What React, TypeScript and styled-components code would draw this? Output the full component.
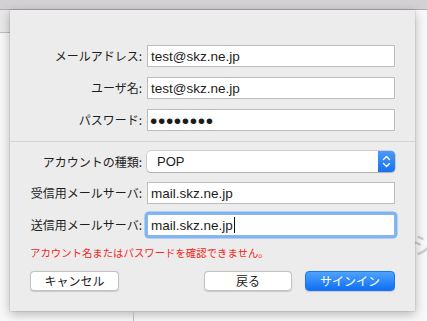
import React from 'react';
import styled, { createGlobalStyle } from 'styled-components';

const GlobalStyle = createGlobalStyle`
  html, body {
    margin: 0;
    padding: 0;
    background: #f7f7f7;
  }
  body {
    font-family: "Noto Sans CJK JP", "Liberation Sans", sans-serif;
    -webkit-font-smoothing: antialiased;
  }
`;

const Page = styled.div`
  width: 427px;
  height: 321px;
  display: flex;
  flex-direction: column;
  overflow: hidden;
  background: #f8f8f8;
`;

const TitleStrip = styled.div`
  height: 9px;
  flex: none;
  background: #d3d1d3;
  border-bottom: 1px solid #aeadae;
`;

const Body = styled.div`
  flex: 1;
  display: flex;
`;

const LeftGutter = styled.div`
  width: 10px;
  flex: none;
  display: flex;
  flex-direction: column;
`;

const GutterBlock = styled.div`
  height: 22px;
  background: #e9e8e9;
  border-bottom: 1px solid #bdbdbd;
`;

const SheetColumn = styled.div`
  width: 405px;
  flex: none;
  display: flex;
  flex-direction: column;
  position: relative;
  z-index: 1;
`;

const Sheet = styled.div`
  background: #ececec;
  box-shadow: 0 3px 10px rgba(0, 0, 0, 0.28), 0 0 1px rgba(0, 0, 0, 0.35);
  padding: 35px 20px 20px 20px;
  display: flex;
  flex-direction: column;
`;

const BelowSheet = styled.div`
  flex: 1;
  display: flex;
  padding-left: 123px;
`;

const VLine = styled.div`
  width: 1px;
  background: #b7b7b7;
`;

const RightGutter = styled.div`
  flex: 1;
  display: flex;
  flex-direction: column;
  padding-top: 222px;
  overflow: hidden;
`;

const GhostGlyph = styled.span`
  font-size: 24px;
  line-height: 24px;
  color: #cbcbcb;
  margin-left: -3px;
  transform: rotate(-8deg);
`;

const FieldGrid = styled.div<{ $gap: number }>`
  display: grid;
  grid-template-columns: 112px 248px;
  column-gap: 5px;
  row-gap: ${(p) => p.$gap}px;
  align-items: center;
`;

const Label = styled.label`
  font-size: 12px;
  color: #1e1e1e;
  text-align: right;
  white-space: nowrap;
  line-height: 14px;
`;

const TextBox = styled.div<{ $focused?: boolean }>`
  height: 22px;
  box-sizing: border-box;
  background: #fff;
  border: 1px solid ${(p) => (p.$focused ? '#8ab8ee' : '#bcbcbc')};
  box-shadow: ${(p) => (p.$focused ? '0 0 0 2.5px #7db4f1' : 'none')};
  border-radius: ${(p) => (p.$focused ? '2px' : '0')};
  padding: 0 3px;
  display: flex;
  align-items: center;
  font-family: "Liberation Sans", Arial, sans-serif;
  font-size: 13.5px;
  color: #1c1c1c;
`;

const Caret = styled.span`
  display: inline-block;
  width: 1px;
  height: 16px;
  background: #111;
  margin-left: 1px;
`;

const Dots = styled.span`
  font-family: "Liberation Sans", Arial, sans-serif;
  font-size: 21px;
  letter-spacing: 0.6px;
  color: #1c1c1c;
  line-height: 1;
  margin-left: -1px;
`;

const Select = styled.div`
  height: 21px;
  box-sizing: border-box;
  background: #fff;
  border-radius: 4px;
  box-shadow: 0 0 0 0.5px rgba(0, 0, 0, 0.25), 0 1px 1px rgba(0, 0, 0, 0.15);
  display: flex;
  align-items: stretch;
  overflow: hidden;
`;

const SelectValue = styled.span`
  flex: 1;
  display: flex;
  align-items: center;
  padding-left: 10px;
  font-family: "Liberation Sans", Arial, sans-serif;
  font-size: 13px;
  color: #1c1c1c;
`;

const Stepper = styled.span`
  width: 17px;
  background: linear-gradient(#4a9af8, #1870f2);
  display: flex;
  align-items: center;
  justify-content: center;
`;

const Separator = styled.div`
  height: 1px;
  background: #d4d4d4;
  margin: 10px -20px 9px -20px;
`;

const ErrorText = styled.div`
  margin-top: 11px;
  font-size: 10.4px;
  color: #f3271c;
  line-height: 12px;
  white-space: nowrap;
`;

const ButtonRow = styled.div`
  margin-top: 12px;
  display: flex;
  gap: 13px;
`;

const Spacer = styled.div`
  flex: 1;
`;

const Button = styled.button<{ $primary?: boolean; $width: number }>`
  width: ${(p) => p.$width}px;
  height: 20px;
  padding: 0;
  border-radius: 4px;
  font-family: "Noto Sans CJK JP", sans-serif;
  font-size: 12px;
  line-height: 18px;
  cursor: default;
  border: 1px solid ${(p) => (p.$primary ? '#1a76f0' : '#c3c3c3')};
  background: ${(p) => (p.$primary ? 'linear-gradient(#4ea3fb, #0f6ff5)' : '#fff')};
  color: ${(p) => (p.$primary ? '#fff' : '#222')};
  box-shadow: 0 0.5px 1px rgba(0, 0, 0, 0.15);
`;

function StepperIcon() {
  return (
    <svg width="9" height="13" viewBox="0 0 9 13" fill="none">
      <path d="M1.5 4.5 L4.5 1.5 L7.5 4.5" stroke="#fff" strokeWidth="1.4" strokeLinecap="round" strokeLinejoin="round" />
      <path d="M1.5 8.5 L4.5 11.5 L7.5 8.5" stroke="#fff" strokeWidth="1.4" strokeLinecap="round" strokeLinejoin="round" />
    </svg>
  );
}

export default function App() {
  return (
    <>
      <GlobalStyle />
      <Page>
        <TitleStrip />
        <Body>
          <LeftGutter>
            <GutterBlock />
          </LeftGutter>
          <SheetColumn>
            <Sheet>
              <FieldGrid $gap={10}>
                <Label>メールアドレス:</Label>
                <TextBox>test@skz.ne.jp</TextBox>
                <Label>ユーザ名:</Label>
                <TextBox>test@skz.ne.jp</TextBox>
                <Label>パスワード:</Label>
                <TextBox>
                  <Dots>••••••••</Dots>
                </TextBox>
              </FieldGrid>
              <Separator />
              <FieldGrid $gap={10}>
                <Label>アカウントの種類:</Label>
                <Select>
                  <SelectValue>POP</SelectValue>
                  <Stepper>
                    <StepperIcon />
                  </Stepper>
                </Select>
                <Label>受信用メールサーバ:</Label>
                <TextBox>mail.skz.ne.jp</TextBox>
                <Label>送信用メールサーバ:</Label>
                <TextBox $focused>
                  mail.skz.ne.jp
                  <Caret />
                </TextBox>
              </FieldGrid>
              <ErrorText>アカウント名またはパスワードを確認できません。</ErrorText>
              <ButtonRow>
                <Button $width={89}>キャンセル</Button>
                <Spacer />
                <Button $width={88}>戻る</Button>
                <Button $primary $width={90}>サインイン</Button>
              </ButtonRow>
            </Sheet>
            <BelowSheet>
              <VLine />
            </BelowSheet>
          </SheetColumn>
          <RightGutter>
            <GhostGlyph>シ</GhostGlyph>
          </RightGutter>
        </Body>
      </Page>
    </>
  );
}
